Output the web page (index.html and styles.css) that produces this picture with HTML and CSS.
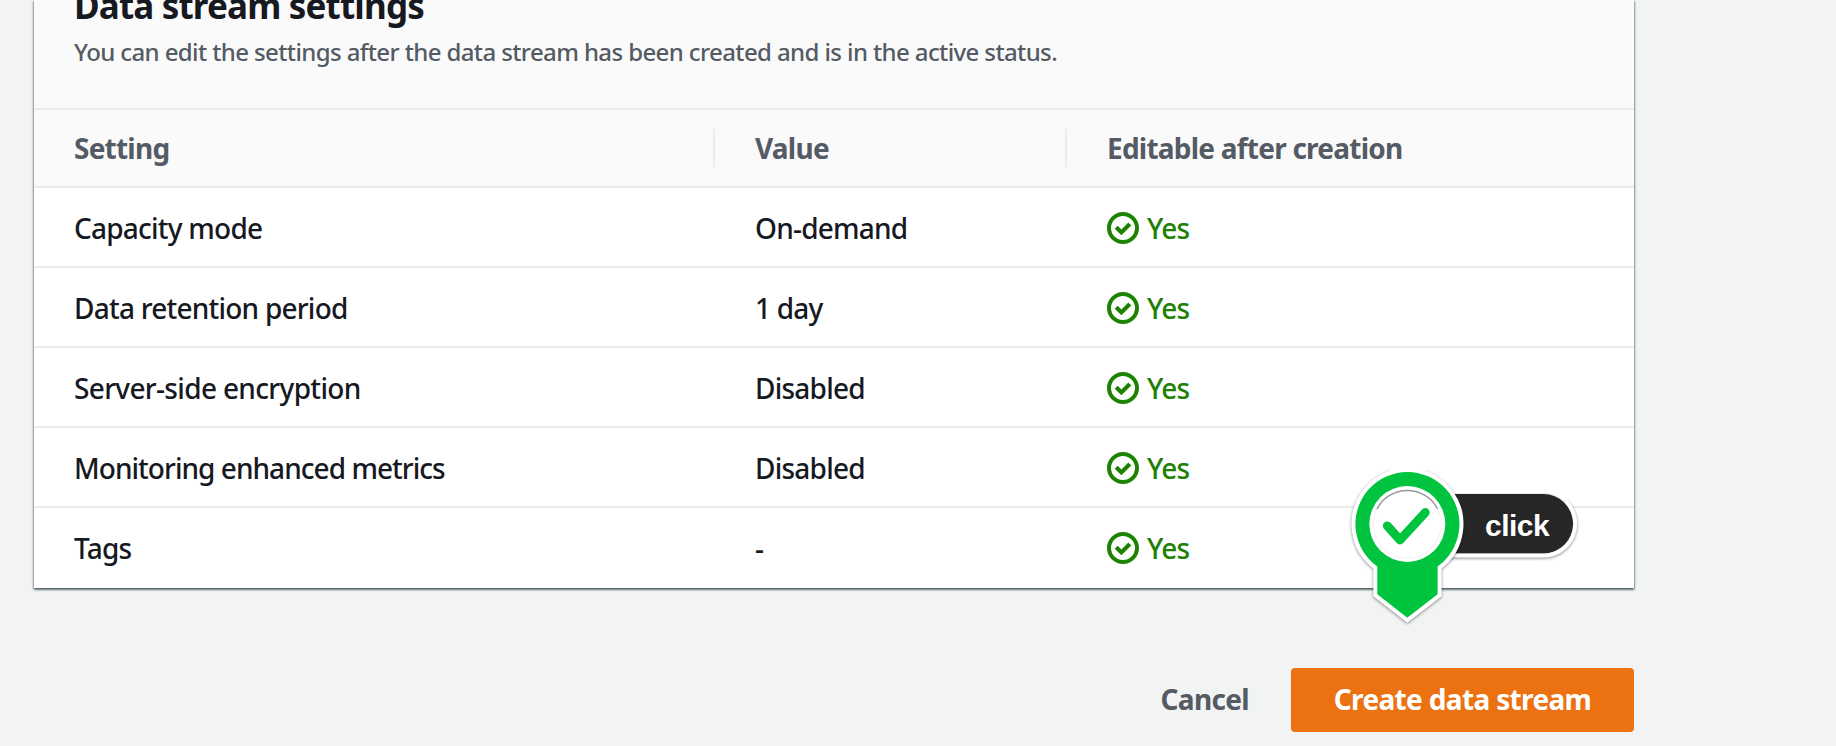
FILE: index.html
```html
<!DOCTYPE html>
<html lang="en">
<head>
<meta charset="utf-8">
<title>Data stream settings</title>
<link rel="stylesheet" href="styles.css">
</head>
<body>
<svg class="defs" width="0" height="0" aria-hidden="true">
  <symbol id="ok" viewBox="0 0 32 32">
    <circle cx="16" cy="16" r="14" fill="none" stroke="currentColor" stroke-width="4"/>
    <path d="M9.2 15.2l5.2 5.2 8.4-8.4" fill="none" stroke="currentColor" stroke-width="4.2"/>
  </symbol>
</svg>
<main class="page">
  <section class="card">
    <header class="card-header">
      <h2 class="title">Data stream settings</h2>
      <p class="description">You can edit the settings after the data stream has been created and is in the active status.</p>
    </header>
    <div class="row head">
      <div class="cell">Setting</div>
      <div class="cell divided">Value</div>
      <div class="cell divided">Editable after creation</div>
    </div>
    <div class="row"><div class="cell">Capacity mode</div><div class="cell">On-demand</div><div class="cell status"><svg class="icon"><use href="#ok"/></svg><span>Yes</span></div></div>
    <div class="row"><div class="cell">Data retention period</div><div class="cell">1 day</div><div class="cell status"><svg class="icon"><use href="#ok"/></svg><span>Yes</span></div></div>
    <div class="row"><div class="cell wide">Server-side encryption</div><div class="cell">Disabled</div><div class="cell status"><svg class="icon"><use href="#ok"/></svg><span>Yes</span></div></div>
    <div class="row"><div class="cell tight">Monitoring enhanced metrics</div><div class="cell">Disabled</div><div class="cell status"><svg class="icon"><use href="#ok"/></svg><span>Yes</span></div></div>
    <div class="row last"><div class="cell">Tags</div><div class="cell">-</div><div class="cell status"><svg class="icon"><use href="#ok"/></svg><span>Yes</span></div></div>
  </section>
  <footer class="actions">
    <button class="btn link">Cancel</button>
    <button class="btn primary">Create data stream</button>
  </footer>
</main>
<div class="marker">
  <svg class="marker-shape" width="260" height="170" viewBox="0 0 260 170">
    <g class="pill-shadow">
      <path d="M70 24H213.3a29.8 29.8 0 0 1 0 59.6H70Z" fill="#262626"/>
      <path d="M235.8 31.3A31.8 31.8 0 0 1 213.3 85.6H70" fill="none" stroke="#fff" stroke-width="4"/>
    </g>
    <path class="pin-shadow" d="M47.3 96.4A52 52 0 1 1 107.6 96.4V124.3L77.3 147.7 47.3 124.3Z" fill="#00c43e" stroke="#fff" stroke-width="8" paint-order="stroke"/>
    <circle cx="77.3" cy="54" r="38" fill="#fff"/>
    <circle cx="77.3" cy="54.3" r="34" fill="none" stroke="#f1f1f1" stroke-width="1"/>
    <path class="rim" d="M47 39A34 34 0 0 1 107.6 39" fill="none" stroke="#999" stroke-width="1.5"/>
    <path d="M57.3 55.8L70 70l25.3-27.5" fill="none" stroke="#00c43e" stroke-width="8.8" stroke-linecap="round" stroke-linejoin="round"/>
  </svg>
  <span class="marker-label">click</span>
</div>
</body>
</html>
```
FILE: styles.css
```css
* { box-sizing: border-box; }
body {
  margin: 0;
  width: 1836px;
  height: 746px;
  overflow: hidden;
  background: #f2f4f3;
  color: #16191f;
  font: 500 28px/36px "Noto Sans", sans-serif;
  letter-spacing: -0.77px;
  position: relative;
}
.defs { position: absolute; }
.page { width: 1600px; margin-left: 34px; }
.card {
  height: 588px;
  background: #fff;
  display: flex;
  flex-direction: column;
  box-shadow: 0 2px 2px 0 rgba(0,28,36,.45), 1px 1px 2px 0 rgba(0,28,36,.3), -1px 1px 2px 0 rgba(0,28,36,.3);
}
.card-header {
  height: 108px;
  padding-left: 40px;
  background: #fafafa;
}
.title {
  margin: -16px 0 0;
  font-size: 35px;
  line-height: 44px;
  font-weight: 700;
  letter-spacing: -0.82px;
  white-space: nowrap;
}
.description {
  margin: 8px 0 0;
  font-size: 24px;
  line-height: 32px;
  font-weight: 500;
  letter-spacing: -0.61px;
  color: #545b64;
  white-space: nowrap;
}
.row {
  height: 80px;
  border-bottom: 2px solid #ebebeb;
  padding-top: 2px;
  display: grid;
  grid-template-columns: 680px 352px 1fr;
  align-items: center;
}
.row.last { border-bottom: 0; padding-top: 0; }
.row.head {
  border-top: 2px solid #ebebeb;
  padding-top: 0;
  background: #fafafa;
  color: #545b64;
  font-weight: 700;
}
.cell { padding-left: 41px; white-space: nowrap; }
.cell:first-child { padding-left: 40px; }
.cell.wide { letter-spacing: -0.66px; }
.cell.tight { letter-spacing: -0.96px; }
.divided { position: relative; }
.divided::before {
  content: "";
  position: absolute;
  left: -1px;
  top: -1px;
  width: 2px;
  height: 38px;
  background: #ebebeb;
}
.status { display: flex; align-items: center; gap: 8px; color: #1d8102; }
.icon { width: 32px; height: 32px; flex: none; }
.actions {
  margin-top: 80px;
  display: flex;
  justify-content: flex-end;
  gap: 42px;
}
.btn {
  border: 0;
  padding: 0 0 2px;
  height: 64px;
  background: none;
  font: 700 28px/36px "Noto Sans", sans-serif;
  letter-spacing: -0.65px;
  color: #545b64;
}
.primary { width: 343px; background: #ec7211; color: #fff; border-radius: 4px; }
.marker { position: absolute; left: 1330px; top: 470px; width: 260px; height: 170px; }
.marker-shape { display: block; }
.pill-shadow, .pin-shadow { filter: drop-shadow(0 1px 1.5px rgba(0,0,0,.45)); }
.rim { filter: blur(.6px); }
.marker-label {
  position: absolute;
  left: 155px;
  top: 38px;
  color: #fff;
  font: 700 30px/36px "Liberation Sans", sans-serif;
  letter-spacing: -0.5px;
}
```
